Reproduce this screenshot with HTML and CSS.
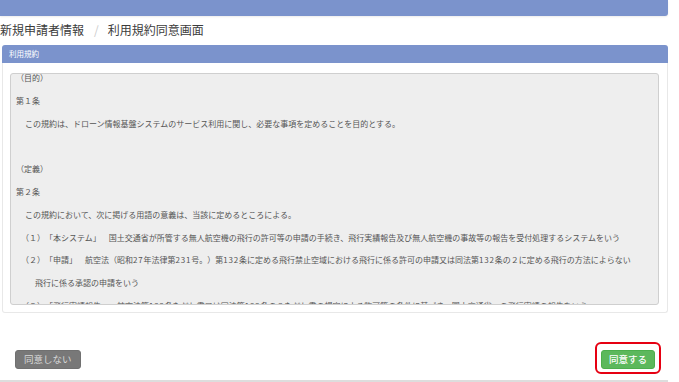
FILE: index.html
```html
<!DOCTYPE html>
<html lang="ja">
<head>
    <meta charset="UTF-8">
    <meta name="viewport" content="width=device-width, initial-scale=1.0">
    <title>利用規約同意画面</title>
    <link rel="stylesheet" href="styles.css">
</head>
<body>
    <div class="container">
        <header class="topbar"></header>

        <h1 class="page-title">新規申請者情報<span class="divider">/</span>利用規約同意画面</h1>

        <section class="panel">
            <div class="panel-heading">利用規約</div>
            <div class="panel-body">
                <div class="terms">
                    <div class="terms-inner">
                        <p>（目的）</p>
                        <p>第１条</p>
                        <p class="indent">この規約は、ドローン情報基盤システムのサービス利用に関し、必要な事項を定めることを目的とする。</p>
                        <p>&nbsp;</p>
                        <p>（定義）</p>
                        <p>第２条</p>
                        <p class="indent">この規約において、次に掲げる用語の意義は、当該に定めるところによる。</p>
                        <p class="item">（１）「本システム」　国土交通省が所管する無人航空機の飛行の許可等の申請の手続き、飛行実績報告及び無人航空機の事故等の報告を受付処理するシステムをいう</p>
                        <p class="item">（２）「申請」　航空法（昭和<span class="num">27</span>年法律第<span class="num">231</span>号。）第<span class="num">132</span>条に定める飛行禁止空域における飛行に係る許可の申請又は同法第<span class="num">132</span>条の２に定める飛行の方法によらない</p>
                        <p class="item-cont">飛行に係る承認の申請をいう</p>
                        <p class="item">（３）「飛行実績報告」　航空法第<span class="num">132</span>条ただし書又は同法第<span class="num">132</span>条の２ただし書の規定による許可等の条件に基づき、国土交通省への飛行実績の報告をいう</p>
                    </div>
                </div>
            </div>
        </section>

        <footer class="actions">
            <button class="btn btn-decline" type="button">同意しない</button>
            <span class="highlight">
                <button class="btn btn-agree" type="button">同意する</button>
            </span>
        </footer>
    </div>
</body>
</html>
```

FILE: styles.css
```css
* {
    box-sizing: border-box;
    margin: 0;
    padding: 0;
}

body {
    font-family: 'Noto Sans CJK JP', 'Noto Sans', sans-serif;
    background-color: #ffffff;
    color: #3c3c3c;
    text-spacing-trim: space-all;
}

.container {
    width: 668px;
}

.topbar {
    height: 16px;
    background-color: #7b93cc;
    border-bottom-right-radius: 3px;
    box-shadow: 0 1px 2px rgba(0, 0, 0, 0.08);
}

.page-title {
    margin: 6px 0 7px;
    font-size: 12px;
    font-weight: 400;
    line-height: 16px;
    color: #3c3c3c;
}

.divider {
    color: #cccccc;
    margin: 0 9px 0 10px;
}

.panel {
    margin-left: 2px;
}

.panel-heading {
    height: 18px;
    padding-left: 7px;
    background-color: #7b93cc;
    color: #ffffff;
    font-size: 7.5px;
    line-height: 18px;
    border-radius: 3px 3px 0 0;
}

.panel-body {
    padding: 10px 8px 7px 7px;
    border: 1px solid #e8e8e8;
    border-top: none;
    border-radius: 0 0 3px 3px;
}

.terms {
    height: 232px;
    overflow: hidden;
    background-color: #eeeeee;
    border: 1px solid #cfcfcf;
    border-radius: 3px;
    padding-left: 5px;
    font-size: 8px;
    color: #555555;
}

.terms-inner {
    margin-top: -7px;
}

.terms p {
    line-height: 22.8px;
    white-space: nowrap;
}

.terms .num {
    letter-spacing: 0.8px;
}

.terms .indent {
    padding-left: 9px;
}

.terms .item {
    padding-left: 5px;
}

.terms .item-cont {
    padding-left: 19px;
}

.actions {
    display: flex;
    justify-content: space-between;
    align-items: flex-start;
    margin-top: 29px;
    padding: 0 7px 6px 15px;
    border-bottom: 2px solid #dddddd;
}

.btn {
    font-family: inherit;
    font-size: 9.5px;
    height: 19px;
    line-height: 17px;
    border-radius: 3px;
    cursor: pointer;
}

.btn-decline {
    margin-top: 8px;
    padding: 0 8px;
    background-color: #787878;
    border: 1px solid #707070;
    color: #d8d8d8;
}

.highlight {
    display: inline-block;
    padding: 6px 4px 3px;
    border: 2px solid #e60012;
    border-radius: 6px;
}

.btn-agree {
    display: block;
    padding: 0 7px;
    background-color: #5cb85c;
    border: 1px solid #4cae4c;
    color: #ffffff;
    font-weight: 500;
}
```
